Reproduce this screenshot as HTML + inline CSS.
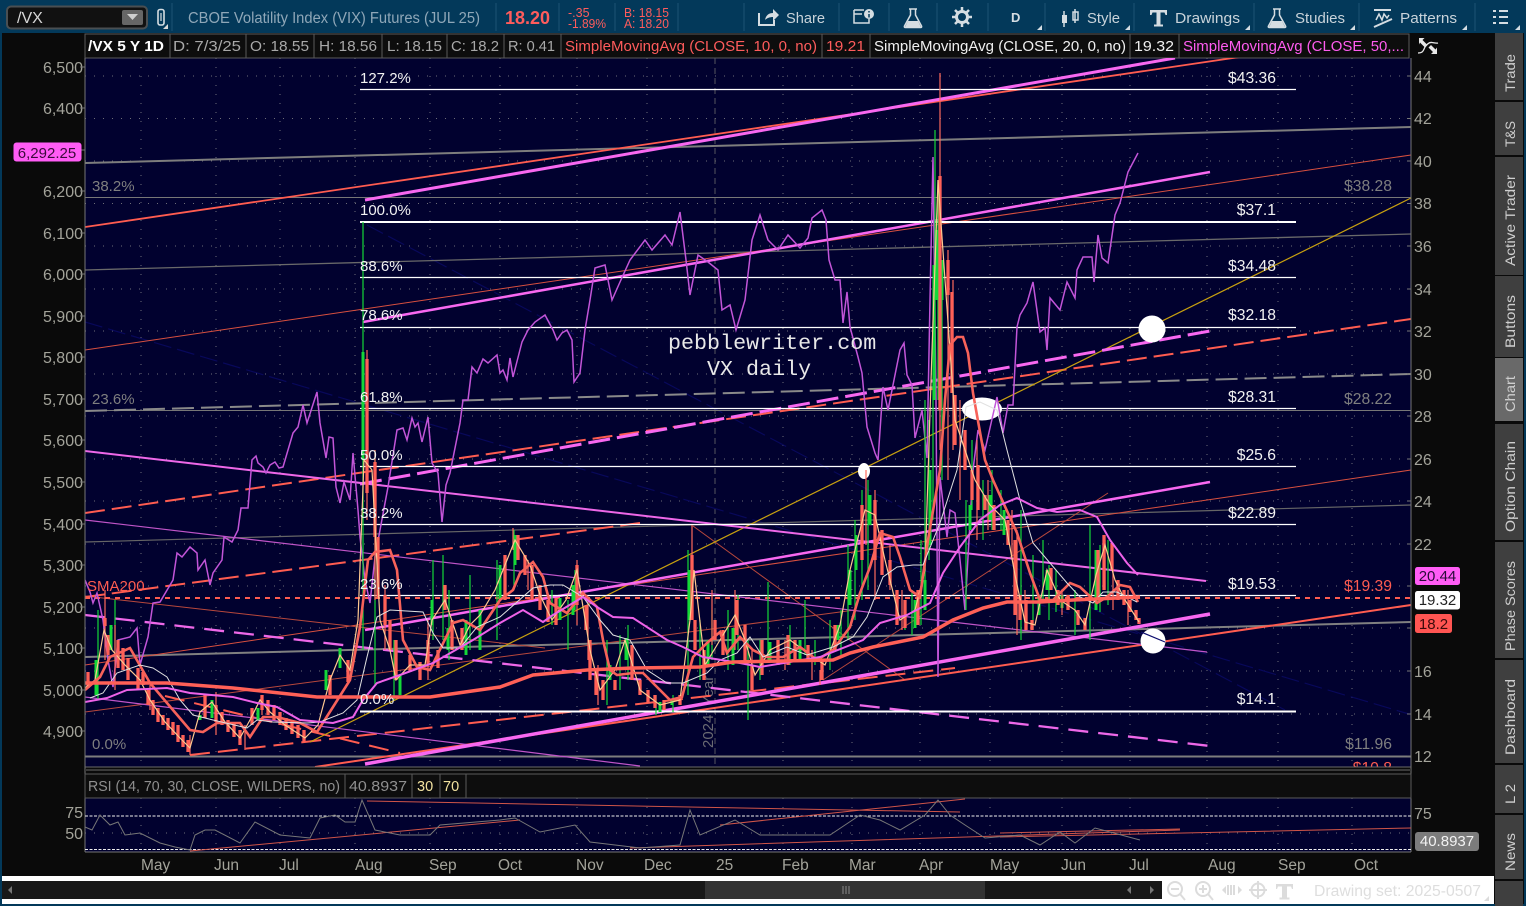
<!DOCTYPE html>
<html><head><meta charset="utf-8"><title>/VX</title>
<style>
html,body{margin:0;padding:0;background:#0a0a0a;width:1526px;height:906px;overflow:hidden}
svg{display:block;font-family:"Liberation Sans",sans-serif}
.ax{fill:#a3a39a;font-size:16px}
.ax2{fill:#a3a39a;font-size:15.5px}
.tb{fill:#c9d3da;font-size:15px}
.lg{fill:#a8a8a8;font-size:14.5px}
.fw{fill:#f2f2f2;font-size:15px}
.fg{fill:#7f7f7f;font-size:15px}
.d{font-size:15.7px}
.tab{fill:#cfcfcf;font-size:14px}
</style></head><body>
<svg width="1526" height="906" viewBox="0 0 1526 906" xmlns="http://www.w3.org/2000/svg">
<rect width="1526" height="906" fill="#0a0a0a"/>
<!-- top toolbar -->
<rect width="1526" height="33" fill="#03395a"/>
<rect x="0" y="0" width="2" height="906" fill="#03395a"/>
<rect x="1524" y="0" width="2" height="906" fill="#03395a"/>
<rect x="0" y="904" width="1526" height="2" fill="#03395a"/>
<rect x="7" y="6.500" width="140" height="22" rx="4" fill="#111" stroke="#4a4f52" stroke-width="2"/>
<text x="17" y="23" fill="#d8d8d8" font-size="16">/VX</text>
<rect x="122" y="10" width="21" height="15" rx="2" fill="#666"/>
<path d="M127 14h11l-5.500 6z" fill="#cfcfcf"/>
<rect x="158" y="9.500" width="6" height="15.500" rx="2" fill="none" stroke="#d5dde2" stroke-width="1.600"/>
<path d="M161 13v8" stroke="#d5dde2" stroke-width="1.200"/>
<path d="M163 29l5-5v5z" fill="#d8d8d8"/>
<g stroke="#1d5274" stroke-width="1">
<path d="M172 3V31M496 3V31M559 3V31M615 3V31M678 3V31M744 3V31M839 3V31M889 3V31M937 3V31M988 3V31M1045 3V31M1134 3V31M1254 3V31M1359 3V31M1475 3V31"/>
</g>
<text x="188" y="23" fill="#8fa7b8" font-size="15.500" textLength="292" lengthAdjust="spacingAndGlyphs">CBOE Volatility Index (VIX) Futures (JUL 25)</text>
<text x="505" y="24" fill="#ff5c5c" font-size="18" font-weight="bold" textLength="45" lengthAdjust="spacingAndGlyphs">18.20</text>
<text x="568" y="17" fill="#ff5c5c" font-size="12.500">-.35</text>
<text x="568" y="28" fill="#ff5c5c" font-size="12.500" textLength="38" lengthAdjust="spacingAndGlyphs">-1.89%</text>
<text x="624" y="17" fill="#ff5c5c" font-size="12.500" textLength="45" lengthAdjust="spacingAndGlyphs">B: 18.15</text>
<text x="624" y="28" fill="#ff5c5c" font-size="12.500" textLength="45" lengthAdjust="spacingAndGlyphs">A: 18.20</text>
<!-- share -->
<path d="M759 13v12h15v-5" fill="none" stroke="#d5dde2" stroke-width="2"/>
<path d="M765 20c1-5 4-7 8-7v-4l6 6-6 6v-4c-3 0-6 1-8 3z" fill="#d5dde2"/>
<text x="786" y="23" class="tb" textLength="39" lengthAdjust="spacingAndGlyphs">Share</text>
<path d="M854 10h10M854 10v13h15v-4" fill="none" stroke="#d5dde2" stroke-width="1.500"/>
<path d="M854 14h8" stroke="#d5dde2" stroke-width="1.500"/>
<circle cx="869" cy="14" r="5" fill="#d5dde2"/>
<path d="M869 11v1.500M869 14v3.500" stroke="#03395a" stroke-width="1.500"/>
<!-- flask -->
<path d="M909 9h8M910.500 9v6l-6 11c-.500 1 0 1.500 1 1.500h15c1 0 1.500-.500 1-1.500l-6-11V9" fill="none" stroke="#d5dde2" stroke-width="1.500"/>
<path d="M908 21h10l3 6h-16z" fill="#d5dde2"/>
<!-- gear -->
<circle cx="962" cy="17" r="5.500" fill="none" stroke="#d5dde2" stroke-width="3"/>
<path d="M962 7v4M962 23v4M952 17h4M968 17h4M955 10l3 3M966 21l3 3M955 24l3-3M966 13l3-3" stroke="#d5dde2" stroke-width="2.500"/>
<text x="1011" y="22" fill="#d5dde2" font-size="13" font-weight="bold">D</text>
<path d="M1037 30l5-5v5z" fill="#d5dde2"/>
<!-- candle -->
<path d="M1064 11v16M1075 9v14" stroke="#d5dde2" stroke-width="1.500"/>
<rect x="1062" y="15" width="5" height="8" fill="#d5dde2"/>
<rect x="1073" y="12" width="5" height="8" fill="none" stroke="#d5dde2" stroke-width="1.500"/>
<text x="1087" y="23" class="tb" textLength="33" lengthAdjust="spacingAndGlyphs">Style</text>
<path d="M1125 30l5-5v5z" fill="#d5dde2"/>
<!-- T -->
<path d="M1150 10h17v5h-1.500l-1-2.500h-4v12h2.500v2h-9v-2h2.500v-12h-4l-1 2.500H1150z" fill="#d5dde2"/>
<text x="1175" y="23" class="tb" textLength="65" lengthAdjust="spacingAndGlyphs">Drawings</text>
<path d="M1245 30l5-5v5z" fill="#d5dde2"/>
<path d="M1273 9h8M1274.500 9v6l-6 11c-.500 1 0 1.500 1 1.500h15c1 0 1.500-.500 1-1.500l-6-11V9" fill="none" stroke="#d5dde2" stroke-width="1.500"/>
<path d="M1272 21h10l3 6h-16z" fill="#d5dde2"/>
<text x="1295" y="23" class="tb" textLength="50" lengthAdjust="spacingAndGlyphs">Studies</text>
<path d="M1350 30l5-5v5z" fill="#d5dde2"/>
<!-- patterns -->
<path d="M1374 10h17" stroke="#d5dde2" stroke-width="2"/>
<path d="M1376 20l3-6 3 6 2-6 3 4 2-3" fill="none" stroke="#d5dde2" stroke-width="1.500"/>
<path d="M1374 27l18-8" stroke="#d5dde2" stroke-width="2"/>
<text x="1400" y="23" class="tb" textLength="57" lengthAdjust="spacingAndGlyphs">Patterns</text>
<path d="M1462 30l5-5v5z" fill="#d5dde2"/>
<path d="M1493 11h3M1493 17h3M1493 23h3M1499 11h9M1499 17h9M1499 23h9" stroke="#d5dde2" stroke-width="2"/>
<path d="M1515 30l5-5v5z" fill="#d5dde2"/>

<!-- plot backgrounds -->
<rect x="85" y="58" width="1326" height="709" fill="#01012f"/>
<rect x="85" y="798" width="1326" height="54" fill="#01012f"/>
<!-- legend -->
<g fill="none" stroke="#5a5a5a" stroke-width="1">
<rect x="85" y="34" width="1324" height="24" fill="#0d0d0d"/>
<path d="M170 34V58M246 34V58M314 34V58M382 34V58M447 34V58M504 34V58M561 34V58M822 34V58M870 34V58M1130 34V58M1179 34V58"/>
</g>
<text x="88" y="51" fill="#fff" font-size="14.500" font-weight="bold" textLength="76" lengthAdjust="spacingAndGlyphs">/VX 5 Y 1D</text>
<text x="173" y="51" class="lg" textLength="68" lengthAdjust="spacingAndGlyphs">D: 7/3/25</text>
<text x="250" y="51" class="lg" textLength="59" lengthAdjust="spacingAndGlyphs">O: 18.55</text>
<text x="319" y="51" class="lg" textLength="58" lengthAdjust="spacingAndGlyphs">H: 18.56</text>
<text x="387" y="51" class="lg" textLength="55" lengthAdjust="spacingAndGlyphs">L: 18.15</text>
<text x="451" y="51" class="lg" textLength="48" lengthAdjust="spacingAndGlyphs">C: 18.2</text>
<text x="508" y="51" class="lg" textLength="47" lengthAdjust="spacingAndGlyphs">R: 0.41</text>
<text x="565" y="51" fill="#ff5c5c" font-size="14.500" textLength="252" lengthAdjust="spacingAndGlyphs">SimpleMovingAvg (CLOSE, 10, 0, no)</text>
<text x="826" y="51" fill="#ff5c5c" font-size="14.500" textLength="39" lengthAdjust="spacingAndGlyphs">19.21</text>
<text x="874" y="51" fill="#f0f0f0" font-size="14.500" textLength="252" lengthAdjust="spacingAndGlyphs">SimpleMovingAvg (CLOSE, 20, 0, no)</text>
<text x="1134" y="51" fill="#f0f0f0" font-size="14.500" textLength="40" lengthAdjust="spacingAndGlyphs">19.32</text>
<text x="1183" y="51" fill="#ff5cf0" font-size="14.500" textLength="221" lengthAdjust="spacingAndGlyphs">SimpleMovingAvg (CLOSE, 50,...</text>
<!-- expand icon -->
<path d="M1419 38h5.500l-2 2 5 5-2.500 2.500-5-5-1 2z" fill="#e8e8e8"/>
<path d="M1437 54h-6l2-2-4.500-4.500 2.500-2.500 4.500 4.500 1.500-2z" fill="#e8e8e8"/>
<path d="M1418 53c5 0 5-2 7-6 2-3 4-5 7-4.500 2 .3 4 1 6 .5" fill="none" stroke="#e8e8e8" stroke-width="1.300"/>

<!-- grid -->
<g stroke="#6d6d78" stroke-width="1" stroke-dasharray="1 8" fill="none">
<path d="M85 76H1411M85 118.500H1411M85 161H1411M85 203.500H1411M85 246H1411M85 289H1411M85 331H1411M85 374H1411M85 416H1411M85 459H1411M85 501H1411M85 544H1411M85 586H1411M85 628H1411M85 671H1411M85 714H1411"/>
<path d="M141 58V767M216 58V767M280 58V767M355 58V767M430 58V767M500 58V767M577 58V767M647 58V767M783 58V767M852 58V767M920 58V767M990 58V767M1062 58V767M1130 58V767M1207 58V767M1278 58V767M1352 58V767"/>
<path d="M85 833H1411M141 798V852M216 798V852M280 798V852M355 798V852M430 798V852M500 798V852M577 798V852M647 798V852M783 798V852M852 798V852M920 798V852M990 798V852M1062 798V852M1130 798V852M1207 798V852M1278 798V852M1352 798V852"/>
</g>
<path d="M715 58V767" stroke="#55555f" stroke-width="1" stroke-dasharray="6 4"/>
<text transform="translate(713,748) rotate(-90)" fill="#6a6a72" font-size="15">2024</text>
<text transform="translate(713,706) rotate(-90)" fill="#6a6a72" font-size="15">Year</text>

<!-- trend lines -->
<svg x="85" y="58" width="1326" height="709" viewBox="85 58 1326 709" overflow="hidden">
<g fill="none">
<path d="M85 322L1409 714M367 225L1285 710" stroke="#08085a" stroke-width="1.200" stroke-dasharray="18 6"/>
<path d="M85 163L1411 127" stroke="#7d7d7d" stroke-width="2"/>
<path d="M85 197.500H1411" stroke="#777" stroke-width="1"/>
<path d="M85 270L1411 234" stroke="#6a6a6a" stroke-width="1.300"/>
<path d="M85 410.500H1411" stroke="#777" stroke-width="1"/>
<path d="M85 411L1411 374" stroke="#8a8a8a" stroke-width="2" stroke-dasharray="22 7"/>
<path d="M85 542L1411 505" stroke="#666" stroke-width="1.200"/>
<path d="M85 657L1411 622" stroke="#808080" stroke-width="2"/>
<path d="M85 756.500H1411" stroke="#7d7d7d" stroke-width="2"/>
<path d="M85 227L1260 54" stroke="#ff5c50" stroke-width="1.800"/>
<path d="M85 350L1411 155" stroke="#d8503f" stroke-width="1"/>
<path d="M85 665L1411 470" stroke="#d8503f" stroke-width="1"/>
<path d="M85 712L855 610" stroke="#b8483c" stroke-width="1"/>
<path d="M85 596L545 648" stroke="#b8483c" stroke-width="1"/>
<path d="M693 526L905 680" stroke="#b8483c" stroke-width="1"/>
<path d="M823 680L1108 493" stroke="#b8483c" stroke-width="1"/>
<path d="M315 767L1411 605" stroke="#ff5c50" stroke-width="2"/>
<path d="M85 513L1411 319" stroke="#ff5c50" stroke-width="2" stroke-dasharray="20 7"/>
<path d="M85 597L640 523" stroke="#ff5c50" stroke-width="2" stroke-dasharray="20 7"/>
<path d="M165 696L400 753" stroke="#ff5c50" stroke-width="2" stroke-dasharray="20 10"/>
<path d="M190 755L955 668" stroke="#ff5c50" stroke-width="2" stroke-dasharray="20 8"/>
<path d="M85 598H1411" stroke="#ff5c50" stroke-width="2" stroke-dasharray="5 5"/>
<path d="M310 742L1411 198" stroke="#c8a010" stroke-width="1.200"/>
<path d="M85 451L1206 581" stroke="#ee68e8" stroke-width="2"/>
<path d="M85 520L1207 652" stroke="#c055c8" stroke-width="1.200"/>
<path d="M85 697L640 766" stroke="#c055c8" stroke-width="1.200"/>
<path d="M85 615L1210 746" stroke="#ee68e8" stroke-width="2.300" stroke-dasharray="20 10"/>
<path d="M365 200L1175 58" stroke="#f868f0" stroke-width="3"/>
<path d="M363 322L1210 172" stroke="#f868f0" stroke-width="2.500"/>
<path d="M360 484L1210 331" stroke="#f868f0" stroke-width="3" stroke-dasharray="22 7"/>
<path d="M365 630L1210 482" stroke="#f868f0" stroke-width="2.500"/>
<path d="M365 764L1210 614" stroke="#f868f0" stroke-width="3.500"/>
</g>

<!-- white circles -->
<circle cx="1152" cy="329" r="13.500" fill="#fff"/>
<circle cx="1153" cy="641" r="12.500" fill="#fff"/>
<ellipse cx="982" cy="409" rx="20" ry="11.500" fill="#fff"/>
<ellipse cx="864" cy="471" rx="6" ry="8" fill="#fff"/>
<path d="M1141 632L1165 642" stroke="#0c0c6e" stroke-width="1.200"/>

<!-- fib lines -->
<g stroke="#fff" fill="none">
<path d="M360 89.500H1296M360 277.500H1296M360 327.500H1296M360 408.500H1296M360 466.500H1296M360 524.500H1296M360 595.500H1296" stroke-width="1.200"/>
<path d="M360 222H1296M360 711.500H1296" stroke-width="2"/>
</g>

<!-- purple price line -->
<polyline fill="none" stroke="#c255d8" stroke-width="1.500" points="85,580 90,592 93,603 97,593 103,620 108,660 113,687 118,640 130,637 137,628 140,665 148,637 153,603 160,602 173,580 177,553 182,557 190,547 197,553 198,570 205,560 210,585 213,573 222,560 224,537 232,542 238,530 241,508 248,508 252,460 256,456 258,463 263,467 266,473 270,465 275,462 279,468 283,467 293,433 298,427 303,405 307,423 317,392 320,423 326,458 329,437 333,438 336,487 340,503 344,482 350,500 353,453 358,510 360,537 365,580 370,603 375,557 380,530 388,487 397,430 403,428 407,440 412,418 415,427 418,423 422,442 428,417 432,463 438,473 442,522 446,485 450,473 460,423 463,400 468,400 472,367 477,373 483,359 488,363 497,355 500,373 503,370 507,380 510,358 513,377 522,342 528,330 535,322 545,315 553,330 557,340 562,333 567,330 572,340 574,382 580,373 585,330 590,300 595,268 605,265 612,300 620,282 630,260 645,240 652,250 665,235 672,245 680,212 686,260 690,295 698,255 708,262 718,270 722,310 730,305 736,330 745,300 752,240 760,215 768,240 778,250 788,235 800,248 808,238 812,218 822,210 826,220 829,260 835,280 840,280 843,323 847,292 850,327 858,357 862,373 867,427 875,453 878,460 883,387 888,410 900,350 904,343 907,375 912,385 915,438 922,410 927,458 930,300 933,157 936,400 938,677 940,477 947,537 950,510 955,513 960,560 965,610 968,557 973,470 978,430 985,450 997,397 1003,433 1008,405 1013,405 1017,327 1020,315 1027,303 1033,282 1040,332 1045,328 1047,350 1050,298 1060,310 1067,282 1075,298 1077,270 1083,257 1092,257 1094,282 1098,235 1102,258 1108,263 1115,215 1120,203 1128,172 1138,153"/>

<!-- candle wicks -->
<path fill="none" stroke="#14d838" stroke-width="1.200" d="M98 610V700M115 600V660M363 222V650M375 450V685M394 640V700M433 560V640M443 555V640M449 590V660M470 575V650M497 560V640M514 530V590M552 590V625M568 600V650M575 570V610M607 640V705M620 635V690M628 625V680M656 695V715M673 695V712M688 550V695M700 620V680M712 610V660M728 610V670M738 595V650M748 640V720M760 640V680M768 582V660M790 625V665M805 600V655M815 640V665M830 620V670M841 610V655M848 545V640M855 520V620M862 490V600M868 480V590M905 600V630M912 590V635M921 540V625M925 400V610M929 420V560M933 280V520M935 130V400M938 180V400M942 300V480M966 500V610M972 440V510M983 480V540M992 470V530M1001 490V530M1021 510V640M1033 555V630M1043 540V600M1049 565V620M1056 570V612M1075 590V635M1090 525V640M1100 545V612M1108 540V605"/>
<!-- green bodies -->
<path fill="none" stroke="#14d838" stroke-width="3" d="M96 660V695M111 625V650M200 715V720M212 700V718M258 708V720M326 670V690M340 648V668M363 352V460M400 675V695M432 600V625M448 628V650M466 620V655M480 610V650M500 565V600M515 535V565M560 598V620M573 585V615M610 665V680M626 638V660M660 702V712M672 700V705M690 570V620M708 640V665M733 628V665M770 642V660M800 640V660M838 625V640M850 570V605M856 535V570M870 495V525M905 618V628M915 600V628M925 580V610M930 470V545M934 265V400M937 230V300M942 260V300M970 505V530M990 495V520M1004 510V535M1039 595V615M1047 570V590M1062 595V608M1096 550V610"/>
<!-- orange wicks -->
<path fill="none" stroke="#ff6a5c" stroke-width="1.200" d="M105 590V660M115 625V690M150 685V710M190 735V755M216 692V735M245 725V750M262 695V715M367 350V520M375 450V600M385 585V650M428 620V680M513 528V550M528 560V590M577 560V625M588 600V660M598 665V705M692 525V600M712 590V645M735 590V650M752 650V690M785 640V670M812 650V680M820 670V685M866 470V545M875 490V600M890 545V590M902 590V630M940 73V450M948 250V480M953 280V450M960 400V500M977 440V540M988 480V530M1012 510V560M1017 530V635M1025 590V630M1062 590V615M1105 540V590M1113 570V610M1128 590V625"/>
<!-- orange bodies -->
<path fill="none" stroke="#ff6057" stroke-width="3.300" d="M88 672V688M105 618V626M108 635V655M118 640V668M123 648V670M128 658V680M138 668V690M143 672V685M148 690V705M153 700V715M158 708V722M163 715V725M168 718V730M173 722V735M178 725V742M183 735V747M188 740V752M205 695V718M216 705V722M222 712V725M228 720V732M234 722V737M240 730V745M252 708V725M262 695V710M268 700V715M274 705V720M280 712V725M286 718V730M292 722V734M298 725V738M304 730V742M330 675V695M348 660V682M367 359V493M375 462V537M378 537V597M385 595V625M390 620V650M396 640V680M410 655V672M420 662V680M428 640V665M438 650V668M445 585V610M452 620V650M462 628V650M505 555V600M518 535V560M525 555V575M532 565V600M540 585V610M548 600V622M556 598V625M577 565V605M586 605V630M590 640V680M596 670V695M603 680V700M615 680V690M632 645V680M640 680V695M648 690V703M655 695V708M664 700V710M680 695V705M692 555V620M695 620V650M704 650V680M715 620V640M723 630V655M737 600V635M745 625V660M752 665V690M762 640V675M778 640V665M788 635V665M795 640V660M808 645V660M822 660V680M835 625V650M862 505V560M875 500V560M882 530V575M890 560V585M897 590V625M905 600V628M918 590V625M940 176V410M948 260V295M952 292V393M955 395V445M965 430V470M972 470V500M978 465V510M985 495V510M994 505V530M1008 520V545M1015 540V615M1020 595V620M1026 600V630M1032 620V630M1051 568V590M1058 590V605M1068 595V610M1078 610V625M1085 618V630M1098 550V600M1104 535V590M1112 543V570M1118 580V600M1124 590V605M1130 600V612M1136 610V620M1139 618V624"/>
<!-- peach close line -->
<polyline fill="none" stroke="#ffc890" stroke-width="1.200" points="85,688 95,680 104,630 112,650 125,665 140,680 150,700 165,722 180,738 190,748 200,712 212,702 225,722 240,738 250,720 260,700 270,712 285,725 305,738 318,725 330,680 340,655 350,670 358,620 364,460 372,470 380,620 390,650 396,680 410,665 425,665 432,620 445,600 460,645 470,625 480,615 495,590 505,565 515,540 530,565 540,595 552,620 566,600 577,570 590,650 600,690 615,670 625,640 640,690 660,705 680,700 690,620 694,570 705,665 720,640 735,615 745,640 755,675 770,650 790,640 810,655 825,665 840,625 850,570 865,510 875,515 885,560 900,620 915,610 925,570 932,350 938,180 945,280 955,420 965,450 975,480 990,505 1005,520 1015,575 1025,622 1035,625 1047,570 1060,600 1075,610 1085,625 1096,575 1105,545 1115,580 1125,600 1139,622"/>
<!-- SMA10 -->
<polyline fill="none" stroke="#f7625a" stroke-width="2.600" points="85,690 100,677 110,657 130,648 150,683 167,703 190,730 203,732 217,723 240,723 250,737 263,717 277,717 300,723 317,732 333,707 350,680 360,627 368,560 375,552 390,550 397,570 403,640 417,667 430,670 453,623 463,620 480,630 500,600 513,590 520,573 533,562 543,577 550,603 567,613 583,593 597,607 603,640 610,670 617,675 633,673 643,673 657,687 670,700 682,697 693,657 707,643 720,632 727,653 740,637 753,650 767,657 783,657 800,647 817,660 833,650 850,627 860,593 870,567 880,533 893,537 900,557 910,590 920,597 928,540 940,470 945,400 950,345 957,337 963,337 968,353 973,393 985,460 993,480 1017,533 1030,573 1040,600 1053,600 1070,583 1080,587 1097,603 1107,597 1120,585 1130,587 1138,602"/>
<!-- SMA20 -->
<polyline fill="none" stroke="#e0e0e0" stroke-width="1" points="90,698 103,693 117,673 140,665 153,668 167,677 180,700 193,715 213,720 247,728 257,720 273,722 307,723 320,722 343,713 357,700 367,657 377,617 390,610 423,612 433,633 443,648 460,648 477,627 500,617 533,588 550,585 563,585 583,597 600,620 613,635 630,640 647,670 667,683 683,683 707,673 720,660 737,653 750,637 763,657 787,647 807,655 833,647 853,637 867,617 883,577 897,567 913,565 923,565 940,523 957,470 966,407 980,402 997,410 1007,450 1020,500 1033,543 1050,563 1067,583 1080,597 1093,603 1103,592 1117,592 1137,602"/>
<!-- SMA50 -->
<polyline fill="none" stroke="#ee62e8" stroke-width="2" points="85,702 107,698 127,690 167,688 190,693 233,697 257,703 277,707 300,720 333,723 353,717 363,700 377,683 400,675 433,663 473,640 500,623 523,610 543,622 553,615 583,597 597,607 613,617 633,618 667,640 683,647 703,657 740,663 760,667 820,657 863,640 880,623 907,615 930,603 943,573 960,547 980,520 1000,505 1017,498 1037,508 1057,512 1080,510 1097,517 1110,540 1127,563 1138,575"/>
<!-- SMA200 -->
<polyline fill="none" stroke="#ff6057" stroke-width="3.500" points="85,683 167,683 233,688 317,697 400,697 430,697 500,687 533,675 587,670 633,668 700,667 733,662 833,660 850,653 873,647 923,637 953,620 983,608 1007,602 1040,602 1073,600 1140,597"/>

<!-- labels in chart -->
<text x="360" y="83" class="fw">127.2%</text>
<text x="360" y="215" class="fw">100.0%</text>
<text x="360" y="271" class="fw">88.6%</text>
<text x="360" y="320" class="fw">78.6%</text>
<text x="360" y="402" class="fw">61.8%</text>
<text x="360" y="460" class="fw">50.0%</text>
<text x="360" y="518" class="fw">38.2%</text>
<text x="360" y="589" class="fw">23.6%</text>
<text x="360" y="704" class="fw">0.0%</text>
<text x="1276" y="83" class="fw d" text-anchor="end">$43.36</text>
<text x="1276" y="215" class="fw d" text-anchor="end">$37.1</text>
<text x="1276" y="271" class="fw d" text-anchor="end">$34.48</text>
<text x="1276" y="320" class="fw d" text-anchor="end">$32.18</text>
<text x="1276" y="402" class="fw d" text-anchor="end">$28.31</text>
<text x="1276" y="460" class="fw d" text-anchor="end">$25.6</text>
<text x="1276" y="518" class="fw d" text-anchor="end">$22.89</text>
<text x="1276" y="589" class="fw d" text-anchor="end">$19.53</text>
<text x="1276" y="704" class="fw d" text-anchor="end">$14.1</text>
<text x="92" y="191" class="fg">38.2%</text>
<text x="92" y="404" class="fg">23.6%</text>
<text x="92" y="749" class="fg">0.0%</text>
<text x="1392" y="191" class="fg d" text-anchor="end">$38.28</text>
<text x="1392" y="404" class="fg d" text-anchor="end">$28.22</text>
<text x="1392" y="749" class="fg d" text-anchor="end">$11.96</text>
<text x="1392" y="591" fill="#ff5c50" font-size="15.700" text-anchor="end">$19.39</text>
<text x="1392" y="773" fill="#ff5c50" font-size="15.700" text-anchor="end">$10.8</text>
<text x="87" y="591" fill="#ff5c50" font-size="15">SMA200</text>
<text x="668" y="349" fill="#e8e8e8" font-family="Liberation Mono,monospace" font-size="21.700">pebblewriter.com</text>
<text x="707" y="375" fill="#e8e8e8" font-family="Liberation Mono,monospace" font-size="21.700">VX daily</text>
</svg>

<!-- plot borders -->
<path d="M85 58V852M1411 58V852" stroke="#777" stroke-width="1"/>
<path d="M85 767H1411" stroke="#6a6a6a" stroke-width="1"/>
<rect x="85" y="769" width="1326" height="2" fill="#3a3a3a"/>
<path d="M85 852H1411" stroke="#777" stroke-width="1"/>

<!-- axes left -->
<g class="ax" text-anchor="end">
<text x="83" y="73">6,500</text><text x="83" y="114">6,400</text><text x="83" y="197">6,200</text><text x="83" y="239">6,100</text><text x="83" y="280">6,000</text><text x="83" y="322">5,900</text><text x="83" y="363">5,800</text><text x="83" y="405">5,700</text><text x="83" y="446">5,600</text><text x="83" y="488">5,500</text><text x="83" y="530">5,400</text><text x="83" y="571">5,300</text><text x="83" y="613">5,200</text><text x="83" y="654">5,100</text><text x="83" y="696">5,000</text><text x="83" y="737">4,900</text>
<text x="83" y="818">75</text><text x="83" y="839">50</text>
</g>
<path d="M80 67h5M80 108h5M80 150h5M80 191h5M80 233h5M80 274h5M80 316h5M80 357h5M80 399h5M80 440h5M80 482h5M80 524h5M80 565h5M80 607h5M80 648h5M80 690h5M80 731h5" stroke="#777"/>
<rect x="13.500" y="142.500" width="68" height="19" rx="3" fill="#ff5cf5"/>
<text x="47" y="158" fill="#3a0a3a" font-size="15" text-anchor="middle">6,292.25</text>

<!-- axes right -->
<g class="ax">
<text x="1414" y="82">44</text><text x="1414" y="124">42</text><text x="1414" y="167">40</text><text x="1414" y="209">38</text><text x="1414" y="252">36</text><text x="1414" y="295">34</text><text x="1414" y="337">32</text><text x="1414" y="380">30</text><text x="1414" y="422">28</text><text x="1414" y="465">26</text><text x="1414" y="507">24</text><text x="1414" y="550">22</text><text x="1414" y="677">16</text><text x="1414" y="720">14</text><text x="1414" y="762">12</text>
<text x="1414" y="819">75</text>
</g>
<path d="M1407 76h4M1407 118.500h4M1407 161h4M1407 203.500h4M1407 246h4M1407 289h4M1407 331h4M1407 374h4M1407 416h4M1407 459h4M1407 501h4M1407 544h4M1407 586h4M1407 628h4M1407 671h4M1407 714h4M1407 756h4" stroke="#777"/>
<rect x="1415" y="567" width="45" height="18" rx="2.500" fill="#ff5cf5"/>
<text x="1437.500" y="581" fill="#2a0a3a" font-size="15" text-anchor="middle">20.44</text>
<rect x="1415" y="591" width="45" height="18.500" rx="2.500" fill="#fff"/>
<text x="1437.500" y="605" fill="#222" font-size="15" text-anchor="middle">19.32</text>
<rect x="1415" y="614" width="37" height="19" rx="2.500" fill="#ff5552"/>
<text x="1433.500" y="629" fill="#3a0a0a" font-size="15" text-anchor="middle">18.2</text>

<!-- RSI -->
<rect x="85" y="774" width="1326" height="24" fill="#0d0d0d" stroke="#5a5a5a"/>
<path d="M345 774V798M412 774V798M440 774V798M466 774V798" stroke="#5a5a5a"/>
<text x="88" y="791" fill="#8f8f8f" font-size="14.500" textLength="252" lengthAdjust="spacingAndGlyphs">RSI (14, 70, 30, CLOSE, WILDERS, no)</text>
<text x="349" y="791" fill="#8f8f8f" font-size="14.500" textLength="58" lengthAdjust="spacingAndGlyphs">40.8937</text>
<text x="417" y="791" fill="#f2e2a0" font-size="14.500">30</text>
<text x="443" y="791" fill="#f2e2a0" font-size="14.500">70</text>
<path d="M85 816H1411M85 849.500H1411" stroke="#eee" stroke-width="1" stroke-dasharray="3 1.500"/>
<g fill="none">
<path d="M190 851L520 820M367 801L960 812M630 848L1180 830M720 825L965 799M1000 833L1180 829M1000 837L1411 828" stroke="#d05548" stroke-width="1"/>
<polyline stroke="#777" stroke-width="1" points="85,827 92,830 100,815 110,825 118,822 125,835 140,833 160,843 175,847 190,850 195,835 205,830 215,830 240,843 255,822 280,835 310,838 320,818 335,815 345,822 355,822 362,800 375,830 400,835 430,835 440,825 500,820 515,818 540,832 575,825 590,842 640,848 680,845 690,810 700,835 735,820 760,835 800,835 830,835 860,815 880,820 900,830 925,815 938,800 950,815 965,825 985,838 1020,835 1040,845 1060,832 1075,843 1095,828 1110,832 1140,840"/>
</g>
<rect x="1415" y="832" width="64" height="19" rx="3" fill="#7c7c7c"/>
<text x="1447" y="846" fill="#f2f2f2" font-size="15" text-anchor="middle">40.8937</text>

<!-- time axis -->
<g class="ax2" fill="#a3a39a">
<text x="141" y="870">May</text><text x="214" y="870">Jun</text><text x="279" y="870">Jul</text><text x="355" y="870">Aug</text><text x="429" y="870">Sep</text><text x="498" y="870">Oct</text><text x="576" y="870">Nov</text><text x="644" y="870">Dec</text><text x="716" y="870">25</text><text x="782" y="870">Feb</text><text x="849" y="870">Mar</text><text x="919" y="870">Apr</text><text x="990" y="870">May</text><text x="1061" y="870">Jun</text><text x="1129" y="870">Jul</text><text x="1208" y="870">Aug</text><text x="1278" y="870">Sep</text><text x="1354" y="870">Oct</text>
</g>

<!-- bottom bar -->
<rect x="2" y="876" width="1492" height="28" fill="#fff"/>
<rect x="2" y="881" width="1160" height="18" fill="#181818"/>
<rect x="705" y="881" width="280" height="18" fill="#333"/>
<path d="M843 886v8M846 886v8M849 886v8" stroke="#888" stroke-width="1"/>
<path d="M12 886v8l-4-4zM1131 886v8l-4-4zM1150 886v8l4-4z" fill="#777"/>
<g fill="none" stroke="#dcdcdc" stroke-width="2">
<circle cx="1175" cy="889" r="7"/><path d="M1180 894l5 6M1171 889h8"/>
<circle cx="1203" cy="889" r="7"/><path d="M1208 894l5 6M1199 889h8M1203 885v8"/>
<circle cx="1258" cy="890" r="6.500"/><path d="M1258 881v18M1249 890h18"/>
</g>
<path d="M1222 890l4-4v8zM1242 890l-4-4v8z" fill="#dcdcdc"/>
<path d="M1228 885v10M1231 885v10M1234 885v10" stroke="#dcdcdc" stroke-width="2"/>
<path d="M1276 884h17v5h-1l-1-2.500h-4v11h2.500v2h-10v-2h2.500v-11h-4l-1 2.500h-1z" fill="#dcdcdc"/>
<text x="1314" y="896" fill="#dedede" font-size="15.500" textLength="167" lengthAdjust="spacingAndGlyphs">Drawing set: 2025-0507</text>
<path d="M1484 901l5-5v5z" fill="#dcdcdc"/>

<!-- right tabs -->
<g fill="#3f3f3f">
<rect x="1495" y="33" width="28" height="67"/><rect x="1495" y="102" width="28" height="53"/><rect x="1495" y="157" width="28" height="118"/><rect x="1495" y="276" width="28" height="81"/><rect x="1495" y="358" width="28" height="63" fill="#696969"/><rect x="1495" y="424" width="28" height="116"/><rect x="1495" y="542" width="28" height="116"/><rect x="1495" y="660" width="28" height="103"/><rect x="1495" y="765" width="28" height="48"/><rect x="1495" y="815" width="28" height="64"/><rect x="1495" y="881" width="28" height="25"/>
</g>
<g class="tab">
<text transform="translate(1515,92) rotate(-90)" textLength="38" lengthAdjust="spacingAndGlyphs">Trade</text>
<text transform="translate(1515,147) rotate(-90)" textLength="26" lengthAdjust="spacingAndGlyphs">T&amp;S</text>
<text transform="translate(1515,266) rotate(-90)" textLength="91" lengthAdjust="spacingAndGlyphs">Active Trader</text>
<text transform="translate(1515,348) rotate(-90)" textLength="53" lengthAdjust="spacingAndGlyphs">Buttons</text>
<text transform="translate(1515,412) rotate(-90)" textLength="36" lengthAdjust="spacingAndGlyphs">Chart</text>
<text transform="translate(1515,532) rotate(-90)" textLength="91" lengthAdjust="spacingAndGlyphs">Option Chain</text>
<text transform="translate(1515,651) rotate(-90)" textLength="90" lengthAdjust="spacingAndGlyphs">Phase Scores</text>
<text transform="translate(1515,755) rotate(-90)" textLength="76" lengthAdjust="spacingAndGlyphs">Dashboard</text>
<text transform="translate(1515,804) rotate(-90)" textLength="20" lengthAdjust="spacingAndGlyphs">L 2</text>
<text transform="translate(1515,871) rotate(-90)" textLength="38" lengthAdjust="spacingAndGlyphs">News</text>
</g>
</svg>
</body></html>
